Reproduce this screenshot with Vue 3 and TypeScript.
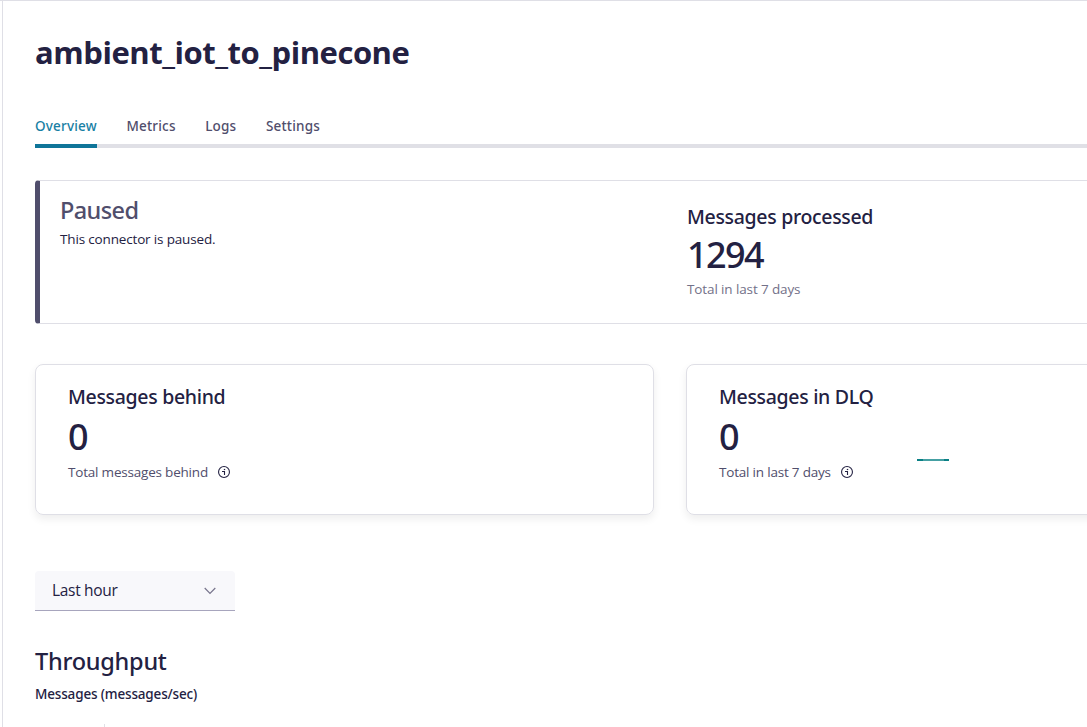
<script setup lang="ts">
interface Stat {
  title: string
  value: number
  caption: string
  sparkline: boolean
}

const tabs: string[] = ['Overview', 'Metrics', 'Logs', 'Settings']
const activeTab = 'Overview'

const stats: Stat[] = [
  { title: 'Messages behind', value: 0, caption: 'Total messages behind', sparkline: false },
  { title: 'Messages in DLQ', value: 0, caption: 'Total in last 7 days', sparkline: true },
]
</script>

<template>
  <main class="page">
    <h1 class="title">ambient_iot_to_pinecone</h1>

    <nav class="tabs">
      <a v-for="tab in tabs" :key="tab" class="tab" :class="{ active: tab === activeTab }">{{ tab }}</a>
    </nav>

    <section class="status">
      <div class="state">
        <h2 class="state-name">Paused</h2>
        <p class="state-text">This connector is paused.</p>
      </div>
      <div class="processed">
        <h3 class="stat-title">Messages processed</h3>
        <div class="stat-value">1294</div>
        <p class="caption muted">Total in last 7 days</p>
      </div>
    </section>

    <section class="cards">
      <article v-for="stat in stats" :key="stat.title" class="card">
        <div class="card-main">
          <h3 class="stat-title">{{ stat.title }}</h3>
          <div class="stat-value">{{ stat.value }}</div>
          <p class="caption">
            <span>{{ stat.caption }}</span>
            <svg class="info" width="12" height="12" viewBox="0 0 12 12" fill="none" stroke="#232142">
              <circle cx="6" cy="6" r="5.45" stroke-width="1.1" />
              <path d="M4 5.5H6.5V9" stroke-width="1.1" />
              <path d="M5.8 3.5H7.2" stroke-width="1.2" />
            </svg>
          </p>
        </div>
        <svg v-if="stat.sparkline" class="spark" width="32" height="2" viewBox="0 0 32 2">
          <rect width="32" height="2" fill="#45a0a3" />
          <rect width="6" height="2" fill="#0a8085" />
          <rect x="27" width="5" height="2" fill="#0a8085" />
        </svg>
      </article>
    </section>

    <div class="select">
      <span class="select-label">Last hour</span>
      <svg width="12" height="8" viewBox="0 0 12 8" fill="none" stroke="#77748c" stroke-width="1.2">
        <path d="M0.7 1L6 6.3L11.3 1" />
      </svg>
    </div>

    <h2 class="chart-title">Throughput</h2>
    <p class="chart-unit">Messages (messages/sec)</p>
    <div class="chart"><i class="gridline"></i></div>
  </main>
</template>

<style>
body {
  margin: 0;
  overflow: hidden;
  background: #fff;
}
</style>

<style scoped>
.page {
  box-sizing: border-box;
  width: 1087px;
  height: 727px;
  margin: 0;
  padding: 31px 0 0 35px;
  overflow: hidden;
  color: #232142;
  font-family: "Open Sans", "Noto Sans", sans-serif;
  border-top: 1px solid #dfdfe6;
  background: linear-gradient(#dfdfe6, #dfdfe6) 2px 0 / 1px 100% no-repeat #fff;
}
h1, h2, h3, p {
  margin: 0;
}
.title {
  font-size: 31px;
  line-height: 40px;
  font-weight: 700;
  letter-spacing: -0.46px;
}
.tabs,
.state-name,
.stat-title,
.stat-value,
.chart-title,
.chart-unit {
  font-family: "Noto Sans", "Open Sans", sans-serif;
  font-weight: 500;
}
.tabs {
  display: flex;
  gap: 29.5px;
  height: 32px;
  margin-top: 44px;
  box-shadow: inset 0 -4px #e0e0e6;
}
.tab {
  box-sizing: border-box;
  height: 32px;
  color: #504e6c;
  font-size: 13.5px;
  line-height: 20px;
  letter-spacing: 0.2px;
}
.tab.active {
  color: #1880a4;
  border-bottom: 4px solid #0f7599;
}
.status {
  box-sizing: border-box;
  display: grid;
  grid-template-columns: 627px 1fr;
  width: 1270px;
  height: 144px;
  margin-top: 32px;
  padding-left: 20px;
  border: 1px solid #dfdfe6;
  border-left: 5px solid #504e6c;
  border-radius: 4px;
}
.state {
  padding-top: 13px;
}
.state-name {
  color: #504e6c;
  font-size: 23.5px;
  line-height: 32px;
  letter-spacing: -0.6px;
}
.state-text {
  margin-top: 3px;
  font-size: 13.5px;
  line-height: 20px;
  letter-spacing: -0.16px;
}
.processed {
  padding-top: 22px;
}
.stat-title {
  font-size: 19.5px;
  line-height: 28px;
  letter-spacing: -0.32px;
}
.stat-value {
  margin-top: 2px;
  font-size: 36px;
  line-height: 44px;
  letter-spacing: -1.6px;
}
.caption {
  display: flex;
  align-items: center;
  gap: 10px;
  margin-top: 3px;
  color: #504e6c;
  font-size: 13.5px;
  line-height: 20px;
  letter-spacing: -0.2px;
}
.caption.muted {
  margin-top: 2px;
  color: #737189;
  letter-spacing: -0.12px;
}
.cards {
  display: grid;
  grid-template-columns: 619px 619px;
  gap: 32px;
  margin-top: 40px;
}
.card {
  box-sizing: border-box;
  display: flex;
  height: 151px;
  padding: 18px 32px 0;
  border: 1px solid #dfdfe6;
  border-radius: 8px;
  box-shadow: 0 4px 8px rgba(0, 0, 0, 0.07);
}
.card-main {
  width: 198px;
}
.card .stat-value {
  margin-top: 4px;
}
.spark {
  margin-top: 76px;
}
.select {
  box-sizing: border-box;
  display: flex;
  align-items: center;
  justify-content: space-between;
  width: 200px;
  height: 40px;
  margin-top: 56px;
  padding: 0 19px 0 17px;
  color: #232142;
  font-size: 15.5px;
  line-height: 24px;
  letter-spacing: -0.32px;
  background: #f8f8fb;
  border-bottom: 1px solid #a7a5bd;
  border-radius: 4px 4px 0 0;
}
.select-label {
  padding-bottom: 1px;
}
.chart-title {
  margin-top: 34px;
  font-size: 23.5px;
  line-height: 32px;
  letter-spacing: -0.25px;
}
.chart-unit {
  margin-top: 7px;
  font-size: 13.5px;
  line-height: 20px;
  letter-spacing: -0.16px;
}
.chart {
  padding: 20px 0 0 69px;
}
.gridline {
  display: block;
  width: 1px;
  height: 100px;
  background: #e0e0e6;
}
</style>
